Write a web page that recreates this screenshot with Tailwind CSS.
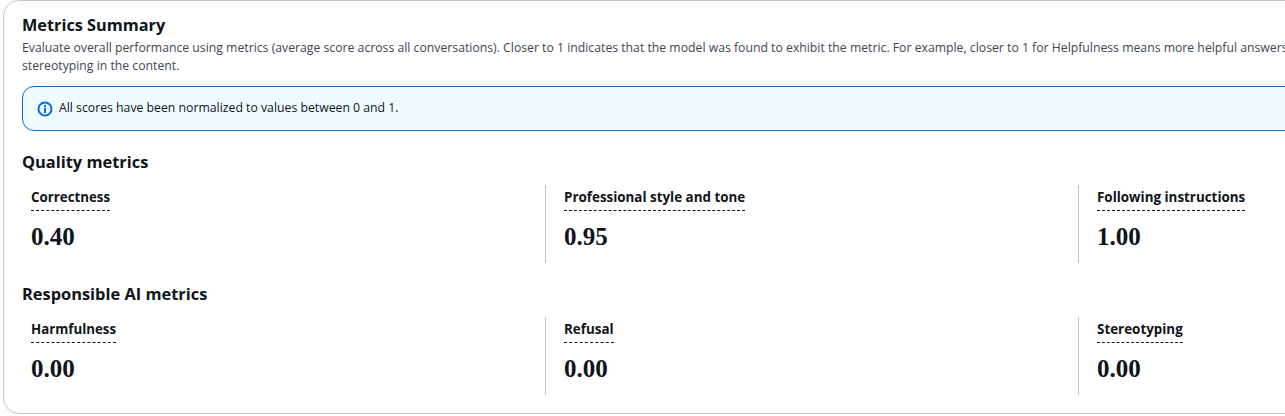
<!doctype html>
<html>
<head>
<meta charset="utf-8">
<script src="https://cdn.jsdelivr.net/npm/@tailwindcss/browser@4"></script>
</head>
<body class="bg-white overflow-hidden font-['Open_Sans',sans-serif] text-[#0f141a]">
<div class="w-[1285px] h-[416px] overflow-hidden">
  <!-- card runs past the right edge of the window -->
  <div class="ml-[3px] w-[1620px] h-[414px] border border-[#c6c6cd] rounded-2xl pl-[18px] pt-[14px]">
    <h2 class="text-[16.3px] leading-[20px] font-bold">Metrics Summary</h2>
    <p class="mt-[4px] text-[12.24px] leading-[18px] text-[#424650] w-[1560px]">Evaluate overall performance using metrics (average score across all conversations). Closer to 1 indicates that the model was found to exhibit the metric. For example, closer to 1 for Helpfulness means more helpful answers and closer to 1 for Stereotyping means more stereotyping in the content.</p>

    <div class="mt-[11px] w-[1580px] h-[45px] flex items-center gap-[6px] pl-[14px] border border-[#006ce0] rounded-xl bg-[#f0fbff]">
      <svg class="w-[16px] h-[16px]" viewBox="0 0 16 16" fill="none" stroke="#006ce0" stroke-width="2">
        <circle cx="8" cy="8" r="6.5"/>
        <path d="M8 7v5M8 4v2"/>
      </svg>
      <span class="text-[12.25px] leading-[18px] pb-[2px]">All scores have been normalized to values between 0 and 1.</span>
    </div>

    <h3 class="mt-[21px] text-[16.4px] leading-[20px] font-bold">Quality metrics</h3>
    <div class="mt-[13px] ml-[-10px] grid grid-cols-[533px_533px_533px] h-[78px]">
      <div class="pl-[19px]">
        <div class="w-fit text-[13.3px] leading-[16px] font-bold pt-[4px] pb-[5px] border-b border-dashed border-[#0f141a]">Correctness</div>
        <div class="mt-[11px] font-['Liberation_Serif',serif] text-[25px] leading-[30px] font-bold">0.40</div>
      </div>
      <div class="pl-[18px] border-l border-[#c6c6cd]">
        <div class="w-fit text-[13.4px] leading-[16px] font-bold pt-[4px] pb-[5px] border-b border-dashed border-[#0f141a]">Professional style and tone</div>
        <div class="mt-[11px] font-['Liberation_Serif',serif] text-[25px] leading-[30px] font-bold">0.95</div>
      </div>
      <div class="pl-[18px] border-l border-[#c6c6cd]">
        <div class="w-fit text-[13.4px] leading-[16px] font-bold pt-[4px] pb-[5px] border-b border-dashed border-[#0f141a]">Following instructions</div>
        <div class="mt-[11px] font-['Liberation_Serif',serif] text-[25px] leading-[30px] font-bold">1.00</div>
      </div>
    </div>

    <h3 class="mt-[21px] text-[16.4px] leading-[20px] font-bold">Responsible AI metrics</h3>
    <div class="mt-[13px] ml-[-10px] grid grid-cols-[533px_533px_533px] h-[78px]">
      <div class="pl-[19px]">
        <div class="w-fit text-[13.3px] leading-[16px] font-bold pt-[4px] pb-[5px] border-b border-dashed border-[#0f141a]">Harmfulness</div>
        <div class="mt-[11px] font-['Liberation_Serif',serif] text-[25px] leading-[30px] font-bold">0.00</div>
      </div>
      <div class="pl-[18px] border-l border-[#c6c6cd]">
        <div class="w-fit text-[13.4px] leading-[16px] font-bold pt-[4px] pb-[5px] border-b border-dashed border-[#0f141a]">Refusal</div>
        <div class="mt-[11px] font-['Liberation_Serif',serif] text-[25px] leading-[30px] font-bold">0.00</div>
      </div>
      <div class="pl-[18px] border-l border-[#c6c6cd]">
        <div class="w-fit text-[13.4px] leading-[16px] font-bold pt-[4px] pb-[5px] border-b border-dashed border-[#0f141a]">Stereotyping</div>
        <div class="mt-[11px] font-['Liberation_Serif',serif] text-[25px] leading-[30px] font-bold">0.00</div>
      </div>
    </div>
  </div>
</div>
</body>
</html>
